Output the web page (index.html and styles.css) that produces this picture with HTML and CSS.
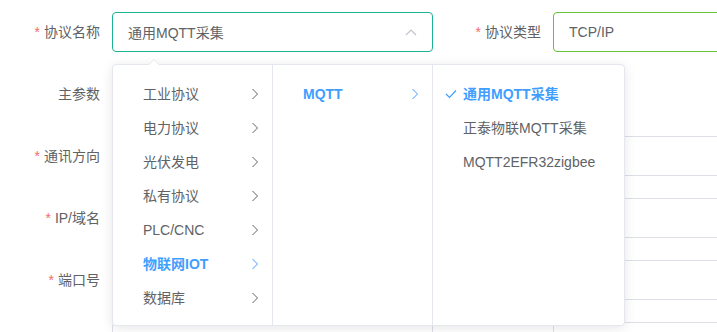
FILE: index.html
```html
<!DOCTYPE html>
<html lang="zh-CN">
<head>
    <meta charset="UTF-8">
    <meta name="viewport" content="width=device-width, initial-scale=1.0">
    <title>协议配置</title>
    <link rel="stylesheet" href="styles.css">
</head>
<body>
    <div class="form-wrap">
        <form class="proto-form">
            <div class="row">
                <label class="lbl"><span class="req">*</span>协议名称</label>
                <div class="field focus">
                    <span>通用MQTT采集</span>
                    <svg class="caret" width="12" height="8" viewBox="0 0 12 8"><path d="M1 7 L6 2 L11 7" fill="none" stroke="#c0c4cc" stroke-width="1.2"/></svg>
                </div>
                <label class="lbl"><span class="req">*</span>协议类型</label>
                <div class="field ok"><span>TCP/IP</span></div>
            </div>
            <div class="row">
                <label class="lbl">主参数</label>
                <div class="field"></div>
            </div>
            <div class="row">
                <label class="lbl"><span class="req">*</span>通讯方向</label>
                <div class="field"></div>
                <span></span>
                <div class="field"></div>
            </div>
            <div class="row">
                <label class="lbl"><span class="req">*</span>IP/域名</label>
                <div class="field"></div>
                <span></span>
                <div class="field"></div>
            </div>
            <div class="row">
                <label class="lbl"><span class="req">*</span>端口号</label>
                <div class="field"></div>
                <span></span>
                <div class="field"></div>
            </div>
            <div class="row">
                <label class="lbl"></label>
                <div class="field"></div>
                <span></span>
                <div class="field"></div>
            </div>
        </form>

        <div class="cascader">
            <div class="arrow"></div>
            <ul class="menu">
                <li>工业协议<svg class="chev" width="8" height="12" viewBox="0 0 8 12"><path d="M1.5 1 L6.5 6 L1.5 11" fill="none" stroke="#606266" stroke-width="1"/></svg></li>
                <li>电力协议<svg class="chev" width="8" height="12" viewBox="0 0 8 12"><path d="M1.5 1 L6.5 6 L1.5 11" fill="none" stroke="#606266" stroke-width="1"/></svg></li>
                <li>光伏发电<svg class="chev" width="8" height="12" viewBox="0 0 8 12"><path d="M1.5 1 L6.5 6 L1.5 11" fill="none" stroke="#606266" stroke-width="1"/></svg></li>
                <li>私有协议<svg class="chev" width="8" height="12" viewBox="0 0 8 12"><path d="M1.5 1 L6.5 6 L1.5 11" fill="none" stroke="#606266" stroke-width="1"/></svg></li>
                <li>PLC/CNC<svg class="chev" width="8" height="12" viewBox="0 0 8 12"><path d="M1.5 1 L6.5 6 L1.5 11" fill="none" stroke="#606266" stroke-width="1"/></svg></li>
                <li class="active">物联网IOT<svg class="chev" width="8" height="12" viewBox="0 0 8 12"><path d="M1.5 1 L6.5 6 L1.5 11" fill="none" stroke="#409eff" stroke-width="1"/></svg></li>
                <li>数据库<svg class="chev" width="8" height="12" viewBox="0 0 8 12"><path d="M1.5 1 L6.5 6 L1.5 11" fill="none" stroke="#606266" stroke-width="1"/></svg></li>
            </ul>
            <ul class="menu">
                <li class="active">MQTT<svg class="chev" width="8" height="12" viewBox="0 0 8 12"><path d="M1.5 1 L6.5 6 L1.5 11" fill="none" stroke="#409eff" stroke-width="1"/></svg></li>
            </ul>
            <ul class="menu last">
                <li class="active"><svg class="check" width="12" height="10" viewBox="0 0 12 10"><path d="M1 5 L4.5 8.5 L11 1.5" fill="none" stroke="#409eff" stroke-width="1.2"/></svg>通用MQTT采集</li>
                <li>正泰物联MQTT采集</li>
                <li>MQTT2EFR32zigbee</li>
            </ul>
        </div>
    </div>
</body>
</html>
```

FILE: styles.css
```css
body {
    margin: 0;
    font-family: "Liberation Sans", "Noto Sans CJK SC", sans-serif;
    font-size: 14px;
    color: #606266;
    background: #fff;
    overflow: hidden;
}
.form-wrap {
    position: relative;
    height: 332px;
    overflow: hidden;
    padding-top: 12px;
    box-sizing: border-box;
}
.proto-form {
    display: flex;
    flex-direction: column;
    gap: 22px;
}
.row {
    display: grid;
    grid-template-columns: 112px 321px 120px 200px;
    height: 40px;
}
.lbl {
    text-align: right;
    padding-right: 12px;
    line-height: 40px;
    color: #606266;
}
.req {
    color: #f56c6c;
    margin-right: 4px;
}
.field {
    box-sizing: border-box;
    height: 40px;
    border: 1px solid #dcdfe6;
    border-radius: 4px;
    padding: 0 15px;
    display: flex;
    align-items: center;
    justify-content: space-between;
    color: #606266;
}
.field.focus {
    border-color: #1ab394;
}
.field.ok {
    border-color: #67c23a;
}

.cascader {
    position: absolute;
    left: 112px;
    top: 64px;
    display: flex;
    background: #fff;
    border: 1px solid #e4e7ed;
    border-radius: 4px;
    box-shadow: 0 2px 12px 0 rgba(0, 0, 0, 0.1);
}
.arrow {
    position: absolute;
    left: 35px;
    top: -6px;
    width: 0;
    height: 0;
    border-left: 6px solid transparent;
    border-right: 6px solid transparent;
    border-bottom: 6px solid #e4e7ed;
}
.arrow::after {
    content: "";
    position: absolute;
    left: -5px;
    top: 1px;
    border-left: 5px solid transparent;
    border-right: 5px solid transparent;
    border-bottom: 5px solid #fff;
}
.menu {
    list-style: none;
    margin: 0;
    padding: 12px 0 10px;
    width: 159px;
    height: 238px;
    border-right: 1px solid #e4e7ed;
}
.menu.last {
    border-right: none;
    width: 191px;
}
.menu li {
    position: relative;
    height: 34px;
    line-height: 34px;
    padding: 0 30px;
    color: #606266;
    white-space: nowrap;
}
.menu li.active {
    color: #409eff;
    font-weight: bold;
}
.chev {
    position: absolute;
    right: 13px;
    top: 11px;
}
.check {
    position: absolute;
    left: 12px;
    top: 12px;
}
```
